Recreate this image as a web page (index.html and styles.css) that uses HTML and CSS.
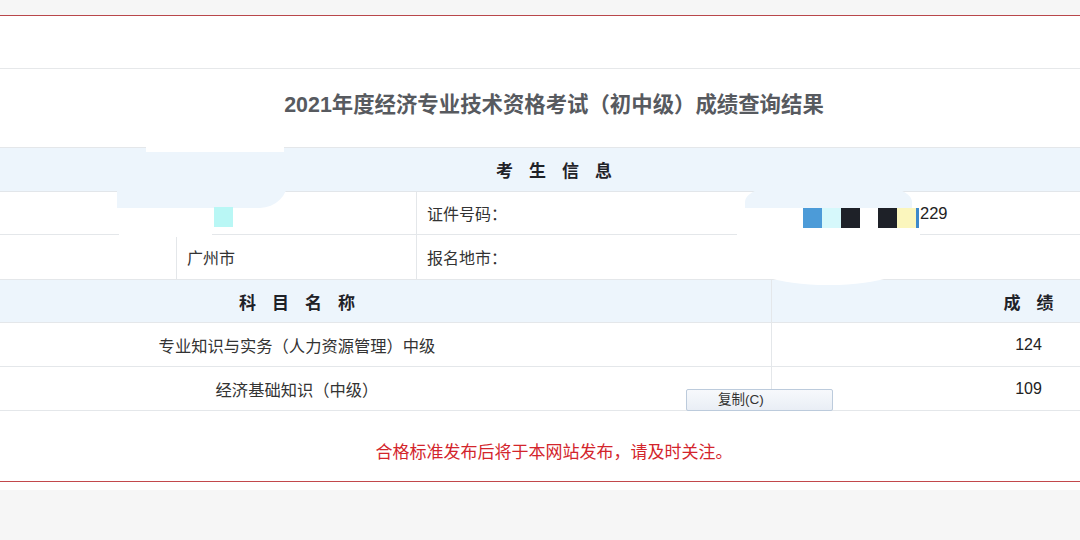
FILE: index.html
```html
<!DOCTYPE html>
<html lang="zh-CN">
<head>
<meta charset="utf-8">
<title>成绩查询结果</title>
<link rel="stylesheet" href="styles.css">
</head>
<body>
<div class="page">
  <div class="topbar"></div>
  <div class="panel">
    <div class="spacer"></div>
    <div class="wide">
      <div class="title-row"><h1 class="title">2021年度经济专业技术资格考试（初中级）成绩查询结果</h1></div>

      <div class="sec-head"><span>考</span><span>生</span><span>信</span><span>息</span></div>

      <div class="info-row r1">
        <div class="cell c-l1"></div>
        <div class="cell c-v1"><span class="sq sq-cyan2"></span></div>
        <div class="cell c-l2">证件号码：</div>
        <div class="cell c-v2">
          <span class="strip">
            <span class="sq sq-blue"></span><span class="sq sq-cyan"></span><span class="sq sq-black"></span><span class="sq sq-gap"></span><span class="sq sq-black"></span><span class="sq sq-yellow"></span><span class="sq sq-bar"></span>
          </span>229
        </div>
      </div>
      <div class="info-row r2">
        <div class="cell c-l1"></div>
        <div class="cell c-v1">广州市</div>
        <div class="cell c-l2">报名地市：</div>
        <div class="cell c-v2"></div>
      </div>

      <div class="grid-row head">
        <div class="gcell gname"><span>科</span><span>目</span><span>名</span><span>称</span></div>
        <div class="gcell gscore"><span>成</span><span>绩</span></div>
      </div>
      <div class="grid-row body">
        <div class="gcell gname">专业知识与实务（人力资源管理）中级</div>
        <div class="gcell gscore num">124</div>
      </div>
      <div class="grid-row body">
        <div class="gcell gname">经济基础知识（中级）</div>
        <div class="gcell gscore num">109</div>
      </div>

      <div class="notice">合格标准发布后将于本网站发布，请及时关注。</div>
    </div>
  </div>
  <div class="after"></div>

  <div class="overlay">
    <div class="blob b-w1"></div>
    <div class="blob b-blue1"></div>
    <div class="blob b-w2"></div>
    <div class="blob b-w3"></div>
    <div class="blob b-w4"></div>
    <div class="blob b-blue2"></div>
    <div class="blob b-w5"></div>
    <div class="ctx-btn">复制(C)</div>
  </div>
</div>
</body>
</html>
```

FILE: styles.css
```css
html, body {
  margin: 0;
  padding: 0;
}
body {
  width: 1080px;
  height: 540px;
  overflow: hidden;
  background: #f6f6f6;
  font-family: "Liberation Sans", "Noto Sans CJK SC", sans-serif;
  color: #333;
}
.page {
  position: relative;
  width: 1080px;
  height: 540px;
  overflow: hidden;
}
.topbar {
  height: 15px;
  background: #f6f6f6;
}
.panel {
  background: #fff;
  border-top: 1px solid #b9474b;
  border-bottom: 1px solid #c2474b;
}
.spacer {
  height: 52px;
  border-bottom: 1px solid #e6e8ea;
}
.wide {
  width: 1462px;
  margin-left: -177px;
}
.title-row {
  height: 79px;
  border-bottom: 1px solid #e4e7ea;
  display: flex;
  align-items: center;
  justify-content: center;
  box-sizing: border-box;
}
.title {
  margin: 0 0 11px 0;
  font-size: 21.4px;
  font-weight: bold;
  color: #575a5f;
}
.sec-head {
  height: 43px;
  border-bottom: 1px solid #e2e6ea;
  background: #edf5fc;
  display: flex;
  align-items: center;
  justify-content: center;
  gap: 16px;
  font-size: 17px;
  font-weight: bold;
  color: #1f2228;
}
.info-row {
  display: grid;
  grid-template-columns: 353px 240px 355px 514px;
  border-bottom: 1px solid #e4e7ea;
  font-size: 16px;
  color: #333;
}
.info-row.r1 { height: 42px; }
.info-row.r2 { height: 44px; }
.cell {
  display: flex;
  align-items: center;
  padding-left: 10px;
  box-sizing: border-box;
}
.c-v1, .c-l2 {
  border-left: 1px solid #e4e7ea;
}
.r1 .c-v1 {
  padding-left: 37px;
  padding-top: 8px;
}
.c-v2 {
  padding-left: 32px;
  font-size: 16.5px;
  color: #222;
}
.strip {
  display: inline-flex;
  position: relative;
  z-index: 3;
  height: 20px;
  margin-top: 10px;
  margin-right: 1px;
}
.sq {
  display: inline-block;
  height: 20px;
  position: relative;
  z-index: 3;
}
.sq-cyan2 { width: 19px; background: #b9f7f5; }
.sq-blue { width: 19px; background: #4c9bd8; }
.sq-cyan { width: 19px; background: #d6f8fb; }
.sq-black { width: 19px; background: #1e2128; }
.sq-gap { width: 18px; background: #fff; }
.sq-yellow { width: 19px; background: #fbf6bd; }
.sq-bar { width: 3px; background: #3d89cb; }

.grid-row {
  display: grid;
  grid-template-columns: 948px 514px;
  border-bottom: 1px solid #e4e7ea;
}
.grid-row.head {
  height: 42px;
  background: #edf5fc;
  font-size: 17px;
  font-weight: bold;
  color: #1f2228;
}
.grid-row.body {
  height: 43px;
  font-size: 16.3px;
  color: #333;
}
.gcell {
  display: flex;
  align-items: center;
  justify-content: center;
  gap: 16px;
}
.gscore {
  border-left: 1px solid #e4e7ea;
}
.num {
  font-size: 16px;
  color: #222;
}
.notice {
  height: 70px;
  display: flex;
  align-items: center;
  justify-content: center;
  padding-top: 9px;
  box-sizing: border-box;
  font-size: 17px;
  color: #d3252c;
}
.after {
  height: 8px;
  background: #fff;
}

.overlay {
  position: absolute;
  left: 0;
  top: 0;
  width: 1080px;
  height: 540px;
  pointer-events: none;
}
.blob {
  position: absolute;
  z-index: 2;
}
.b-w1 { left: 146px; top: 146px; width: 138px; height: 6px; background: #fff; }
.b-blue1 {
  left: 117px; top: 152px; width: 171px; height: 56px;
  background: #edf5fc;
  border-radius: 0 40px 30px 0 / 0 30px 30px 0;
}
.b-w2 { left: 117px; top: 208px; width: 171px; height: 26px; background: #fff; }
.b-w3 { left: 119px; top: 233px; width: 93px; height: 4px; background: #fff; }
.b-w4 { left: 181px; top: 246px; width: 6px; height: 8px; background: #fff; }
.b-blue2 {
  left: 745px; top: 182px; width: 167px; height: 27px;
  background: #edf5fc;
  border-radius: 60px 60px 0 0 / 20px 20px 0 0;
}
.b-w5 {
  left: 737px; top: 208px; width: 183px; height: 77px;
  background: #fff;
  border-radius: 0 10px 90px 90px / 0 10px 30px 30px;
}
.ctx-btn {
  position: absolute;
  z-index: 4;
  left: 686px;
  top: 389px;
  width: 147px;
  height: 22px;
  box-sizing: border-box;
  border: 1px solid #bccbdc;
  border-radius: 2px;
  background: linear-gradient(#f7f9fc, #e9eef5);
  padding-left: 31px;
  font-size: 13.5px;
  line-height: 20px;
  color: #333;
}
```
